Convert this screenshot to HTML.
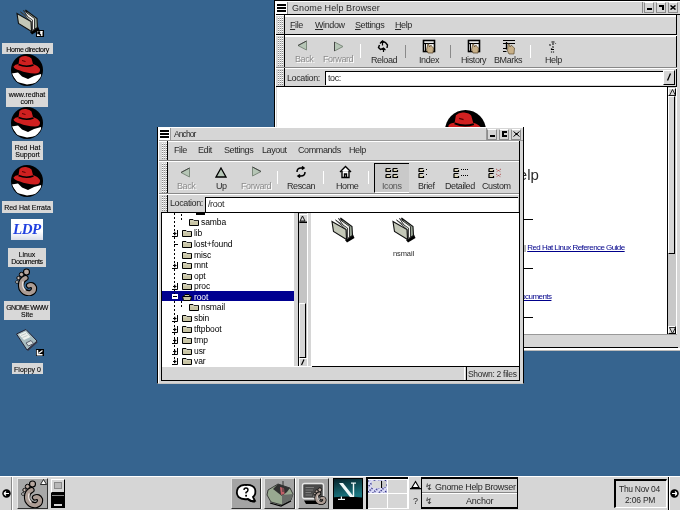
<!DOCTYPE html>
<html><head><meta charset="utf-8">
<style>
*{margin:0;padding:0;box-sizing:border-box}
html,body{width:680px;height:510px;overflow:hidden}
body{position:relative;background:#36648f;font-family:"Liberation Sans",sans-serif;font-size:11px;color:#000}
.a{position:absolute}
.g{background:#d6d6d6}
.w{background:#fff}
.k{background:#000}
.t{position:absolute;white-space:nowrap;line-height:12px;will-change:transform;color:#2a2a2a}
.hd{background:repeating-linear-gradient(90deg,transparent 0 1px,#d6d6d6 1px 2px),repeating-linear-gradient(0deg,#8a8a8a 0 1px,#fff 1px 2px)}
.dis{color:#8c8c8c;text-shadow:1px 1px 0 #fff}
.lbl{position:absolute;background:#d8d8d8;font-size:7px;line-height:7px;text-align:center;white-space:nowrap;padding-top:3px;will-change:transform;-webkit-text-stroke:0.1px #000}
u{text-decoration:underline;text-underline-offset:1px}
</style></head><body>
<!-- ============ DESKTOP ICONS ============ -->
<svg width="0" height="0" style="position:absolute">
<defs>
<symbol id="rh" viewBox="0 0 32 32">
<clipPath id="rhc"><circle cx="16" cy="16" r="15.2"/></clipPath>
<circle cx="16" cy="16" r="16" fill="#000"/>
<g clip-path="url(#rhc)">
<path d="M0.5 19.5L7 18.5L11 22.5L17 25L23 22L30 20L31 24L26 29L16 30.5L6 28Z" fill="#fff"/>
<path d="M2.5 12.5Q4 10 7.5 10L8.5 4Q11 1.5 15 2Q19 2.5 20.5 4.5L22 10Q27 11.5 29 15Q29.5 19.5 24 19.5Q15 19 9 16.5Q3 15 2.5 12.5Z" fill="#d02020"/>
<path d="M7.5 10.5Q15 13.5 22.5 11" fill="none" stroke="#000" stroke-width="1.5"/>
<path d="M11 6.5L14.5 7.5" stroke="#500" stroke-width="1"/>
</g>
</symbol>
<symbol id="fold" viewBox="0 0 27 28">
<path d="M17 24L25 18.5L26.5 22L19 26.5Z" fill="#000"/>
<path d="M12.5 2L24 10.5L24.5 19.5L18.5 23.5L18 13.5Z" fill="#98a494" stroke="#111" stroke-width="1.1"/>
<path d="M10.5 2.5L21.5 10.5L21.5 21L18.5 23.5L18 13.5Z" fill="#f4f4f0" stroke="#222" stroke-width="0.9"/>
<path d="M7.5 4L19.5 12L19.5 22.5L18.5 23.5L18 13.5Z" fill="#dde2da" stroke="#333" stroke-width="0.9"/>
<path d="M4 5.5L18 13.5L18.5 23.5L5.5 15.5Z" fill="#c4c8b8" stroke="#111" stroke-width="1.1"/>
</symbol>
<symbol id="tf" viewBox="0 0 10 8">
<path d="M0.5 1.5H4L5 2.5H9.5V7.5H0.5Z" fill="#c8c4a4" stroke="#000" stroke-width="1"/>
<path d="M1 3H9" stroke="#fff" stroke-width="0.6" opacity="0.6"/>
</symbol>
</defs>
</svg>
<svg class="a" style="left:13px;top:8px" width="27" height="28"><use href="#fold"/></svg>
<svg class="a" style="left:36px;top:30px" width="8" height="7"><rect width="8" height="7" fill="#000"/><rect x="1" y="1" width="5.5" height="5" fill="#fff"/><path d="M2 2.5L5 5.5M2 2H3.5V3.5H2Z" stroke="#000" stroke-width="1.4"/><rect x="5" y="1" width="1.5" height="1.2" fill="#fff"/></svg>
<div class="lbl" style="left:2px;top:43px;width:51px;height:11px" ><span style="letter-spacing:-0.35px">Home directory</span></div>

<svg class="a" style="left:11px;top:54px" width="32" height="32"><use href="#rh"/></svg>
<div class="lbl" style="left:6px;top:88px;width:42px;height:19px">www.redhat<br>com</div>

<svg class="a" style="left:11px;top:107px" width="32" height="32"><use href="#rh"/></svg>
<div class="lbl" style="left:12px;top:141px;width:31px;height:19px">Red Hat<br>Support</div>

<svg class="a" style="left:11px;top:165px" width="32" height="32"><use href="#rh"/></svg>
<div class="lbl" style="left:2px;top:201px;width:51px;height:12px">Red Hat Errata</div>

<div class="a w" style="left:11px;top:219px;width:32px;height:21px;background:linear-gradient(#fff 60%,#d8dce8)"></div>
<div class="t" style="left:13px;top:222px;font-family:'Liberation Serif',serif;font-weight:bold;font-style:italic;font-size:15px;line-height:15px;color:#2040e0;letter-spacing:-0.5px">LDP</div>
<div class="lbl" style="left:8px;top:248px;width:38px;height:19px">Linux<br><span style="letter-spacing:-0.45px">Documents</span></div>

<svg width="0" height="0" style="position:absolute"><defs><symbol id="foot" viewBox="0 0 24 28"><path d="M11.5 10Q5.5 13 7.5 20.5Q10.5 26 16.5 25Q20.5 23.5 20 19.5Q18.5 16 15 17.5" fill="none" stroke="#000" stroke-width="6.2" stroke-linecap="round"/><path d="M11.5 10Q5.5 13 7.5 20.5Q10.5 26 16.5 25Q20.5 23.5 20 19.5Q18.5 16 15 17.5" fill="none" stroke="#ac9c94" stroke-width="4" stroke-linecap="round"/><path d="M9 14Q8 19 11 22" fill="none" stroke="#ece4e0" stroke-width="1.5" stroke-linecap="round"/><circle cx="12.5" cy="4" r="3" fill="#b8a8a0" stroke="#000" stroke-width="1.1"/><circle cx="7.5" cy="6.5" r="2.2" fill="#b8a8a0" stroke="#000" stroke-width="1"/><circle cx="4.5" cy="10" r="1.7" fill="#c8b8b0" stroke="#000" stroke-width="0.9"/><circle cx="3" cy="14" r="1.4" fill="#f0f0f0" stroke="#000" stroke-width="0.8"/></symbol></defs></svg><svg class="a" style="left:14px;top:268px" width="24" height="28"><use href="#foot"/></svg>
<div class="lbl" style="left:4px;top:301px;width:46px;height:19px"><span style="letter-spacing:-0.75px">GNOME WWW</span><br>Site</div>

<svg class="a" style="left:15px;top:328px" width="24" height="24"><path d="M1.5 6L11 1.5L22 13L12 22Z" fill="#a8bcc0" stroke="#223" stroke-width="1"/><path d="M4 6.5L10.5 3.5L15.5 9L9 12Z" fill="#eef2ee"/><path d="M6 7.5L11 5.5M7.5 9.5L12.5 7.5" stroke="#b8c0c0" stroke-width="0.8"/><path d="M11 15L16 12.5L18.5 15.5L13.5 18Z" fill="#d8e0e0" stroke="#445" stroke-width="0.8"/><path d="M12 22L22 13L22.5 14.5L13 23Z" fill="#334"/></svg>
<svg class="a" style="left:36px;top:349px" width="8" height="7"><rect width="8" height="7" fill="#000"/><path d="M1.5 1V5.8H6.5" fill="none" stroke="#fff" stroke-width="1.5"/><path d="M2.5 4.5L6.5 1.5" stroke="#fff" stroke-width="1.3"/></svg>
<div class="lbl" style="left:12px;top:363px;width:31px;height:11px">Floppy 0</div>
<!-- ============ HELP BROWSER WINDOW ============ -->
<div class="a g" style="left:274px;top:0;width:410px;height:351px;border-left:1px solid #000;border-top:1px solid #000;border-bottom:1px solid #bbb"></div>
<div class="a" style="left:275px;top:348px;width:405px;height:2px;background:#fff"></div>
<div class="a" style="left:275px;top:1px;width:405px;height:1px;background:#fff"></div>
<div class="a" style="left:275px;top:1px;width:1px;height:348px;background:#fff"></div>
<!-- title bar -->
<div class="a" style="left:276px;top:2px;width:11px;height:12px;background:#fff"></div>
<div class="a k" style="left:277px;top:4px;width:9px;height:2px"></div>
<div class="a k" style="left:277px;top:7px;width:9px;height:2px"></div>
<div class="a k" style="left:277px;top:10px;width:9px;height:2px"></div>
<div class="a" style="left:287px;top:2px;width:1px;height:12px;background:#888"></div>
<div class="a" style="left:642px;top:2px;width:1px;height:11px;background:#888"></div>
<div class="t" style="left:292px;top:2px;font-size:9px;letter-spacing:0.1px">Gnome Help Browser</div>
<!-- title buttons -->
<div class="a" style="left:644px;top:2px;width:10px;height:11px;border-top:1px solid #fff;border-left:1px solid #8c8c8c;border-right:1px solid #8c8c8c;border-bottom:1px solid #8c8c8c"></div>
<div class="a k" style="left:647px;top:8px;width:5px;height:2px"></div>
<div class="a" style="left:656px;top:2px;width:10px;height:11px;border-top:1px solid #fff;border-left:1px solid #8c8c8c;border-right:1px solid #8c8c8c;border-bottom:1px solid #8c8c8c"></div>
<div class="a k" style="left:659px;top:5px;width:5px;height:2px"></div>
<div class="a k" style="left:662px;top:5px;width:2px;height:5px"></div>
<div class="a" style="left:668px;top:2px;width:10px;height:11px;border-top:1px solid #fff;border-left:1px solid #8c8c8c;border-right:1px solid #8c8c8c;border-bottom:1px solid #8c8c8c"></div>
<svg class="a" style="left:670px;top:5px" width="6" height="5"><path d="M0.5 0.5L5.5 4.5M5.5 0.5L0.5 4.5" stroke="#000" stroke-width="1.5"/></svg>
<div class="a k" style="left:276px;top:14px;width:404px;height:1px"></div>
<!-- menubar -->
<div class="a" style="left:276px;top:15px;width:401px;height:1px;background:#fff"></div>
<div class="a hd" style="left:278px;top:17px;width:5px;height:16px;"></div>
<div class="a k" style="left:284px;top:15px;width:1px;height:19px"></div>
<div class="a" style="left:285px;top:16px;width:391px;height:1px;background:#fff"></div>
<div class="a k" style="left:676px;top:15px;width:1px;height:72px"></div>
<div class="t" style="left:290px;top:19px;font-size:9px;letter-spacing:-0.4px"><u>F</u>ile</div>
<div class="t" style="left:315px;top:19px;font-size:9px;letter-spacing:-0.4px"><u>W</u>indow</div>
<div class="t" style="left:355px;top:19px;font-size:9px;letter-spacing:-0.4px"><u>S</u>ettings</div>
<div class="t" style="left:395px;top:19px;font-size:9px;letter-spacing:-0.4px"><u>H</u>elp</div>
<div class="a k" style="left:276px;top:34px;width:401px;height:1px"></div>
<!-- toolbar -->
<div class="a" style="left:276px;top:35px;width:401px;height:1px;background:#fff"></div>
<div class="a hd" style="left:278px;top:37px;width:5px;height:29px;"></div>
<div class="a k" style="left:284px;top:35px;width:1px;height:32px"></div>
<div class="a" style="left:285px;top:36px;width:391px;height:1px;background:#fff"></div>
<div class="a" style="left:276px;top:67px;width:401px;height:1px;background:#888"></div>
<!-- location bar -->
<div class="a" style="left:276px;top:68px;width:401px;height:1px;background:#fff"></div>
<div class="a hd" style="left:278px;top:70px;width:5px;height:15px;"></div>
<div class="a k" style="left:284px;top:68px;width:1px;height:18px"></div>
<div class="t" style="left:287px;top:72px;font-size:9px;letter-spacing:-0.4px">Location:</div>
<div class="a w" style="left:325px;top:71px;width:338px;height:14px;border-top:1px solid #000;border-left:1px solid #000"></div>
<div class="t" style="left:328px;top:72px;font-size:9px;letter-spacing:-0.4px">toc:</div>
<div class="a g" style="left:663px;top:70px;width:12px;height:15px;border-top:1px solid #fff;border-left:1px solid #fff;border-right:1px solid #000;border-bottom:1px solid #000"></div>
<svg class="a" style="left:666px;top:73px" width="6" height="8"><path d="M4.5 0.5L1.5 7.5" stroke="#000" stroke-width="1.3"/></svg>
<div class="a k" style="left:276px;top:86px;width:401px;height:1px"></div>
<!-- content -->
<div class="a w" style="left:277px;top:87px;width:390px;height:247px"></div>
<div class="a k" style="left:667px;top:87px;width:1px;height:247px"></div>
<div class="a" style="left:668px;top:87px;width:8px;height:247px;background:#c8c8c8"></div>
<div class="a" style="left:676px;top:87px;width:1px;height:248px;background:#fff"></div>
<div class="a" style="left:277px;top:334px;width:400px;height:1px;background:#999"></div>
<!-- status bar -->
<div class="a k" style="left:276px;top:347px;width:402px;height:1px"></div>
<!-- toolbar items -->
<svg class="a" style="left:297px;top:40px" width="11" height="11"><path d="M9.5 1L1 5.5L9.5 10Z" fill="#b6c6b6" stroke="#7c8a7c" stroke-width="1"/><path d="M9.5 1L1 5.5" stroke="#444" stroke-width="1"/></svg>
<div class="t dis" style="left:295px;top:53px;font-size:9px;letter-spacing:-0.4px">Back</div>
<svg class="a" style="left:333px;top:41px" width="11" height="11"><path d="M1.5 1L10 5.5L1.5 10Z" fill="#b6c6b6" stroke="#7c8a7c" stroke-width="1"/><path d="M1.5 1L1.5 10" stroke="#444" stroke-width="1"/></svg>
<div class="t dis" style="left:323px;top:53px;font-size:9px;letter-spacing:-0.4px">Forward</div>
<div class="a" style="left:360px;top:44px;width:1px;height:14px;background:#fff"></div>
<svg class="a" style="left:376px;top:39px" width="14" height="14"><path d="M4 4.5L6.5 2L9.5 3.5L11.5 6L11 9M3.5 6L2.5 8.5L4.5 10.5L7 9.5L9.5 11" fill="none" stroke="#000" stroke-width="1.4"/><path d="M6.5 2V6.5M5 3.5L6.5 2L8 3.5M7.5 9V13M6 10.5L7.5 9L9 10.5" fill="none" stroke="#000" stroke-width="1.2"/></svg>
<div class="t" style="left:371px;top:54px;font-size:9px;letter-spacing:-0.4px">Reload</div>
<div class="a" style="left:405px;top:45px;width:1px;height:13px;background:#8a8a8a"></div>
<svg class="a" style="left:422px;top:39px" width="14" height="15"><rect x="1.5" y="1.5" width="11" height="11" fill="#fff" stroke="#000" stroke-width="1.6"/><path d="M1.5 4.5H12.5" stroke="#000" stroke-width="1.2"/><path d="M3.5 5V12" stroke="#000" stroke-width="1"/><path d="M5.5 6Q6 3.5 7 6L7.5 8L8.5 6.5Q9.5 6 10 7.5L11.5 9L11 14H6L4.5 11Z" fill="#c8b088" stroke="#4a3a20" stroke-width="0.7"/></svg>
<div class="t" style="left:419px;top:54px;font-size:9px;letter-spacing:-0.4px">Index</div>
<div class="a" style="left:450px;top:45px;width:1px;height:13px;background:#8a8a8a"></div>
<svg class="a" style="left:467px;top:39px" width="14" height="15"><rect x="1.5" y="1.5" width="11" height="11" fill="#fff" stroke="#000" stroke-width="1.6"/><path d="M1.5 4.5H12.5" stroke="#000" stroke-width="1.2"/><path d="M3.5 5V12" stroke="#000" stroke-width="1"/><path d="M5.5 6Q6 3.5 7 6L7.5 8L8.5 6.5Q9.5 6 10 7.5L11.5 9L11 14H6L4.5 11Z" fill="#c8b088" stroke="#4a3a20" stroke-width="0.7"/></svg>
<div class="t" style="left:461px;top:54px;font-size:9px;letter-spacing:-0.4px">History</div>
<svg class="a" style="left:502px;top:39px" width="14" height="16"><path d="M1 1.5H13M1 4.5H13M1 9.5H4.5M1 12.5H4.5" stroke="#000" stroke-width="1.2"/><path d="M4.5 3V10.5" stroke="#000" stroke-width="1.3"/><path d="M6 6Q6.5 3.5 7.5 6L8 8L9 6.5Q10 6 10.5 7.5L12.5 9L12 15H7L5.5 12Z" fill="#c8b088" stroke="#4a3a20" stroke-width="0.6"/></svg>
<div class="t" style="left:494px;top:54px;font-size:9px;letter-spacing:-0.4px">BMarks</div>
<div class="a" style="left:530px;top:45px;width:1px;height:13px;background:#fff"></div>
<svg class="a" style="left:548px;top:40px" width="10" height="13"><path d="M3.5 2H6.5M4 4H6M1.5 4.5L2.5 5.5M7.5 3V3.5M4.5 6.5L5.5 7.5M3.5 8.5V9.5H6M3.5 11.5V12.5M5.5 11.5V12.5" stroke="#000" stroke-width="1.2"/></svg>
<div class="t" style="left:545px;top:54px;font-size:9px;letter-spacing:-0.4px">Help</div>
<!-- help content -->
<svg class="a" style="left:445px;top:110px" width="41" height="41"><use href="#rh"/></svg>
<div class="t" style="left:508px;top:165px;font-size:15px;line-height:20px">Help</div>
<div class="a k" style="left:412px;top:219px;width:121px;height:1px"></div>
<div class="t" style="left:524px;top:242px;font-size:8px;letter-spacing:-0.55px">|&nbsp;<span style="color:#00008b;text-decoration:underline">Red Hat Linux Reference Guide</span></div>
<div class="a k" style="left:412px;top:268px;width:121px;height:1px"></div>
<div class="t" style="left:497px;top:291px;font-size:8px;letter-spacing:-0.55px"><span style="color:#00008b;text-decoration:underline">Other Documents</span></div>
<div class="a k" style="left:412px;top:317px;width:121px;height:1px"></div>
<!-- help scrollbar -->
<div class="a" style="left:668px;top:88px;width:8px;height:8px;border-top:1px solid #fff;border-left:1px solid #fff;border-right:1px solid #000;border-bottom:1px solid #000;background:#d6d6d6"></div>
<svg class="a" style="left:669px;top:89px" width="7" height="7"><path d="M3.5 0.5L0.5 6.5H6.5Z" fill="#d6d6d6" stroke="#000" stroke-width="0.8"/></svg>
<div class="a" style="left:668px;top:96px;width:7px;height:158px;border-top:1px solid #fff;border-left:1px solid #fff;border-right:1px solid #000;border-bottom:1px solid #000;background:#d6d6d6"></div>
<div class="a" style="left:668px;top:326px;width:8px;height:8px;border-top:1px solid #fff;border-left:1px solid #fff;border-right:1px solid #000;border-bottom:1px solid #000;background:#d6d6d6"></div>
<svg class="a" style="left:669px;top:327px" width="7" height="7"><path d="M3.5 6.5L0.5 0.5H6.5Z" fill="#d6d6d6" stroke="#000" stroke-width="0.8"/></svg>
<!-- ============ ANCHOR WINDOW ============ -->
<div class="a g" style="left:157px;top:127px;width:367px;height:257px;border-right:1px solid #000;border-bottom:1px solid #c4c4c4;border-left:1px solid #000"></div>
<div class="a" style="left:158px;top:127px;width:365px;height:1px;background:#fff"></div>
<div class="a" style="left:158px;top:128px;width:1px;height:255px;background:#fff"></div>
<!-- title -->
<div class="a" style="left:159px;top:128px;width:11px;height:12px;background:#fff"></div>
<div class="a k" style="left:160px;top:130px;width:9px;height:2px"></div>
<div class="a k" style="left:160px;top:133px;width:9px;height:2px"></div>
<div class="a k" style="left:160px;top:136px;width:9px;height:2px"></div>
<div class="a" style="left:170px;top:128px;width:1px;height:12px;background:#999"></div>
<div class="t" style="left:174px;top:128px;font-size:8.5px;letter-spacing:-0.9px">Anchor</div>
<div class="a" style="left:486px;top:128px;width:1px;height:12px;background:#999"></div>
<div class="a" style="left:487px;top:129px;width:10px;height:11px;border-top:1px solid #fff;border-left:1px solid #8c8c8c;border-right:1px solid #8c8c8c;border-bottom:1px solid #8c8c8c"></div>
<div class="a k" style="left:490px;top:135px;width:5px;height:2px"></div>
<div class="a" style="left:499px;top:129px;width:10px;height:11px;border-top:1px solid #fff;border-left:1px solid #8c8c8c;border-right:1px solid #8c8c8c;border-bottom:1px solid #8c8c8c"></div>
<div class="a" style="left:502px;top:131px;width:5px;height:6px;border:2px solid #000;border-right:none"></div>
<div class="a" style="left:511px;top:129px;width:10px;height:11px;border-top:1px solid #fff;border-left:1px solid #8c8c8c;border-right:1px solid #8c8c8c;border-bottom:1px solid #8c8c8c"></div>
<svg class="a" style="left:513px;top:131px" width="7" height="6"><path d="M0.5 0.5L6.5 5.5M6.5 0.5L0.5 5.5" stroke="#000" stroke-width="1"/><rect x="2.5" y="2" width="2" height="2" fill="#000"/></svg>
<div class="a" style="left:159px;top:140px;width:364px;height:1px;background:#9a9a9a"></div>
<!-- menubar -->
<div class="a" style="left:159px;top:141px;width:360px;height:1px;background:#fff"></div>
<div class="a hd" style="left:162px;top:143px;width:5px;height:16px"></div>
<div class="a k" style="left:167px;top:141px;width:1px;height:72px"></div>
<div class="a k" style="left:519px;top:141px;width:1px;height:72px"></div>
<div class="t" style="left:174px;top:144px;font-size:9px;letter-spacing:-0.4px">File</div>
<div class="t" style="left:198px;top:144px;font-size:9px;letter-spacing:-0.4px">Edit</div>
<div class="t" style="left:224px;top:144px;font-size:9px;letter-spacing:-0.4px">Settings</div>
<div class="t" style="left:262px;top:144px;font-size:9px;letter-spacing:-0.4px">Layout</div>
<div class="t" style="left:298px;top:144px;font-size:9px;letter-spacing:-0.4px">Commands</div>
<div class="t" style="left:349px;top:144px;font-size:9px;letter-spacing:-0.4px">Help</div>
<div class="a" style="left:159px;top:160px;width:360px;height:1px;background:#8a8a8a"></div>
<!-- toolbar -->
<div class="a" style="left:159px;top:161px;width:360px;height:1px;background:#fff"></div>
<div class="a hd" style="left:162px;top:163px;width:5px;height:30px"></div>
<div class="a" style="left:159px;top:193px;width:360px;height:1px;background:#8a8a8a"></div>
<svg class="a" style="left:180px;top:167px" width="11" height="11"><path d="M9.5 1L1 5.5L9.5 10Z" fill="#b6c6b6" stroke="#7c8a7c" stroke-width="1"/><path d="M9.5 1L1 5.5" stroke="#444" stroke-width="1"/></svg>
<div class="t dis" style="left:177px;top:180px;font-size:9px;letter-spacing:-0.4px">Back</div>
<svg class="a" style="left:215px;top:167px" width="12" height="11"><path d="M6 1L11 10H1Z" fill="#b6c6b6" stroke="#000" stroke-width="1.3"/></svg>
<div class="t" style="left:216px;top:180px;font-size:9px;letter-spacing:-0.4px">Up</div>
<svg class="a" style="left:251px;top:166px" width="11" height="11"><path d="M1.5 1L10 5.5L1.5 10Z" fill="#b6c6b6" stroke="#7c8a7c" stroke-width="1"/><path d="M1.5 1L10 5.5" stroke="#444" stroke-width="1"/></svg>
<div class="t dis" style="left:241px;top:180px;font-size:9px;letter-spacing:-0.4px">Forward</div>
<div class="a" style="left:277px;top:171px;width:1px;height:13px;background:#fff"></div>
<svg class="a" style="left:295px;top:166px" width="12" height="12"><path d="M2 6Q2 2 6 2H8M7 0.5L9 2L7 3.5M10 6Q10 10 6 10H4M5 8.5L3 10L5 11.5" fill="none" stroke="#000" stroke-width="1.5"/></svg>
<div class="t" style="left:287px;top:180px;font-size:9px;letter-spacing:-0.4px">Rescan</div>
<div class="a" style="left:323px;top:171px;width:1px;height:13px;background:#fff"></div>
<svg class="a" style="left:339px;top:165px" width="13" height="14"><path d="M1 7L6.5 1.5L12 7M3 6V12.5H10V6M5.5 12.5V9H7.5V12.5" fill="#fff" stroke="#000" stroke-width="1.4"/></svg>
<div class="t" style="left:336px;top:180px;font-size:9px;letter-spacing:-0.4px">Home</div>
<div class="a" style="left:368px;top:171px;width:1px;height:13px;background:#fff"></div>
<div class="a" style="left:374px;top:163px;width:35px;height:30px;background:#c9c9c9;border-top:1px solid #000;border-left:1px solid #000;border-bottom:1px solid #fff"></div>
<svg class="a" style="left:385px;top:167px" width="14" height="12"><g fill="#d8d0b0" stroke="#000" stroke-width="1.2"><path d="M1 1.5H5.5M1 1.5V4.5H5.5V3"/><path d="M8 1.5H12.5M8 1.5V4.5H12.5V3"/><path d="M1 7.5H5.5M1 7.5V10.5H5.5V9"/><path d="M8 7.5H12.5M8 7.5V10.5H12.5V9"/></g></svg>
<div class="t" style="left:382px;top:180px;font-size:9px;letter-spacing:-0.4px;color:#555">Icons</div>
<svg class="a" style="left:418px;top:167px" width="12" height="12"><g fill="#d8d0b0" stroke="#000" stroke-width="1.2"><path d="M1 1.5H5.5M1 1.5V4.5H5.5V3"/><path d="M1 6.5H5.5M1 6.5V10.5H5.5V9"/></g><path d="M8 2.5H10M8 7.5H10" stroke="#000" stroke-dasharray="1 1"/></svg>
<div class="t" style="left:418px;top:180px;font-size:9px;letter-spacing:-0.4px">Brief</div>
<svg class="a" style="left:453px;top:167px" width="16" height="12"><g fill="#d8d0b0" stroke="#000" stroke-width="1.2"><path d="M1 1.5H5.5M1 1.5V4.5H5.5V3"/><path d="M1 6.5H5.5M1 6.5V10.5H5.5V9"/></g><path d="M8 2.5H15M8 8.5H15" stroke="#000" stroke-dasharray="1 1"/></svg>
<div class="t" style="left:445px;top:180px;font-size:9px;letter-spacing:-0.4px">Detailed</div>
<svg class="a" style="left:488px;top:167px" width="14" height="12"><g fill="#d8d0b0" stroke="#000" stroke-width="1.2"><path d="M1 1.5H5.5M1 1.5V4.5H5.5V3"/><path d="M1 6.5H5.5M1 6.5V10.5H5.5V9"/></g><path d="M8 2L13 5M13 2L8 5M8 7L13 10M13 7L8 10" stroke="#a44" stroke-width="1" stroke-dasharray="1 1"/></svg>
<div class="t" style="left:482px;top:180px;font-size:9px;letter-spacing:-0.4px">Custom</div>
<!-- location -->
<div class="a" style="left:159px;top:194px;width:360px;height:1px;background:#fff"></div>
<div class="a hd" style="left:162px;top:196px;width:5px;height:15px"></div>
<div class="t" style="left:170px;top:197px;font-size:9px;letter-spacing:-0.4px">Location:</div>
<div class="a w" style="left:205px;top:197px;width:313px;height:15px;border-top:1px solid #000;border-left:1px solid #000"></div>
<div class="t" style="left:208px;top:198px;font-size:9px;letter-spacing:-0.4px">/root</div>
<!-- content box -->
<div class="a k" style="left:161px;top:212px;width:359px;height:1px"></div>
<div class="a k" style="left:161px;top:212px;width:1px;height:169px"></div>
<div class="a k" style="left:519px;top:212px;width:1px;height:169px"></div>
<div class="a k" style="left:161px;top:380px;width:359px;height:1px"></div>
<!-- tree pane -->
<div class="a w" style="left:162px;top:213px;width:132px;height:153px"></div>
<div class="a" style="left:294px;top:213px;width:4px;height:153px;background:#d6d6d6"></div>
<div class="a k" style="left:298px;top:213px;width:1px;height:153px"></div>
<div class="a" style="left:299px;top:213px;width:8px;height:153px;background:#c4c4c4"></div>
<div class="a" style="left:307px;top:213px;width:1px;height:153px;background:#fff"></div>
<div class="a" style="left:308px;top:213px;width:3px;height:153px;background:#d6d6d6"></div>
<div class="a" style="left:311px;top:213px;width:1px;height:153px;background:#fff"></div>
<div class="a" style="left:299px;top:214px;width:8px;height:9px;background:#d6d6d6;border-top:1px solid #fff;border-left:1px solid #fff;border-bottom:1px solid #000"></div>
<svg class="a" style="left:299px;top:215px" width="8" height="8"><path d="M3.5 1L1 6H6Z" fill="#d6d6d6" stroke="#000" stroke-width="0.9"/><path d="M0 7H8" stroke="#000"/></svg>
<div class="a" style="left:299px;top:303px;width:7px;height:55px;background:#d6d6d6;border-top:1px solid #fff;border-left:1px solid #fff;border-right:1px solid #000;border-bottom:1px solid #000"></div>
<div class="a" style="left:299px;top:358px;width:8px;height:8px;background:#d6d6d6;border-top:1px solid #fff;border-left:1px solid #fff"></div>
<svg class="a" style="left:299px;top:358px" width="8" height="8"><path d="M5 1.5L2.5 7" stroke="#000" stroke-width="1.2"/></svg>
<!-- icon pane -->
<div class="a w" style="left:312px;top:213px;width:207px;height:153px"></div>
<div class="a k" style="left:311px;top:366px;width:208px;height:1px"></div>
<!-- status bar -->
<div class="a" style="left:162px;top:366px;width:150px;height:1px;background:#fff"></div>
<div class="a" style="left:464px;top:367px;width:1px;height:13px;background:#fff"></div>
<div class="a k" style="left:466px;top:367px;width:1px;height:13px"></div>
<div class="a" style="left:467px;top:367px;width:52px;height:13px;overflow:hidden"><div class="t" style="left:1px;top:1px;font-size:8.5px;letter-spacing:-0.3px">Shown: 2 files</div></div>
<!-- tree rows -->
<div class="a k" style="left:196px;top:213px;width:9px;height:2px"></div>
<div class="a" style="left:162px;top:291px;width:132px;height:10px;background:#000090"></div>
<div class="a" style="left:174px;top:213px;width:1px;height:152px;background:repeating-linear-gradient(#000 0 2px,transparent 2px 4px)"></div>
<div class="a" style="left:181px;top:214px;width:1px;height:8px;background:repeating-linear-gradient(#000 0 2px,transparent 2px 4px)"></div>
<div class="a" style="left:181px;top:301px;width:1px;height:6px;background:repeating-linear-gradient(#fff 0 0,transparent 0 0),repeating-linear-gradient(#000 0 2px,transparent 2px 4px)"></div>
<svg class="a" style="left:189px;top:218px" width="10" height="8"><use href="#tf"/></svg>
<div class="t" style="left:201px;top:216px;font-size:8.5px;letter-spacing:-0.1px;color:#000">samba</div>
<svg class="a" style="left:171px;top:229px" width="9" height="9"><path d="M6.5 1V7.5H1" fill="none" stroke="#000" stroke-width="1"/><path d="M2 4.5H5.5M3.75 2.75V6.25" stroke="#000" stroke-width="1.2"/></svg>
<svg class="a" style="left:182px;top:229px" width="10" height="8"><use href="#tf"/></svg>
<div class="t" style="left:194px;top:227px;font-size:8.5px;letter-spacing:-0.1px;color:#000">lib</div>
<div class="a k" style="left:174px;top:244px;width:4px;height:1px"></div>
<svg class="a" style="left:182px;top:240px" width="10" height="8"><use href="#tf"/></svg>
<div class="t" style="left:194px;top:238px;font-size:8.5px;letter-spacing:-0.1px;color:#000">lost+found</div>
<svg class="a" style="left:182px;top:251px" width="10" height="8"><use href="#tf"/></svg>
<div class="t" style="left:194px;top:249px;font-size:8.5px;letter-spacing:-0.1px;color:#000">misc</div>
<svg class="a" style="left:171px;top:261px" width="9" height="9"><path d="M6.5 1V7.5H1" fill="none" stroke="#000" stroke-width="1"/><path d="M2 4.5H5.5M3.75 2.75V6.25" stroke="#000" stroke-width="1.2"/></svg>
<svg class="a" style="left:182px;top:261px" width="10" height="8"><use href="#tf"/></svg>
<div class="t" style="left:194px;top:259px;font-size:8.5px;letter-spacing:-0.1px;color:#000">mnt</div>
<svg class="a" style="left:182px;top:272px" width="10" height="8"><use href="#tf"/></svg>
<div class="t" style="left:194px;top:270px;font-size:8.5px;letter-spacing:-0.1px;color:#000">opt</div>
<svg class="a" style="left:171px;top:282px" width="9" height="9"><path d="M6.5 1V7.5H1" fill="none" stroke="#000" stroke-width="1"/><path d="M2 4.5H5.5M3.75 2.75V6.25" stroke="#000" stroke-width="1.2"/></svg>
<svg class="a" style="left:182px;top:282px" width="10" height="8"><use href="#tf"/></svg>
<div class="t" style="left:194px;top:280px;font-size:8.5px;letter-spacing:-0.1px;color:#000">proc</div>
<div class="a" style="left:172px;top:294px;width:6px;height:5px;background:#fff"></div><div class="a k" style="left:173px;top:296px;width:4px;height:1px"></div>
<svg class="a" style="left:182px;top:293px" width="10" height="8"><path d="M1.5 3.5L3 1.5H7L8.5 3.5" fill="#c8c4a4" stroke="#000" stroke-width="1"/><path d="M0.5 3.5H9.5L8.5 7.5H1.5Z" fill="#c8c4a4" stroke="#000" stroke-width="1"/></svg>
<div class="t" style="left:194px;top:291px;font-size:8.5px;letter-spacing:-0.1px;color:#fff">root</div>
<svg class="a" style="left:189px;top:303px" width="10" height="8"><use href="#tf"/></svg>
<div class="t" style="left:201px;top:301px;font-size:8.5px;letter-spacing:-0.1px;color:#000">nsmail</div>
<svg class="a" style="left:171px;top:314px" width="9" height="9"><path d="M6.5 1V7.5H1" fill="none" stroke="#000" stroke-width="1"/><path d="M2 4.5H5.5M3.75 2.75V6.25" stroke="#000" stroke-width="1.2"/></svg>
<svg class="a" style="left:182px;top:314px" width="10" height="8"><use href="#tf"/></svg>
<div class="t" style="left:194px;top:312px;font-size:8.5px;letter-spacing:-0.1px;color:#000">sbin</div>
<svg class="a" style="left:171px;top:325px" width="9" height="9"><path d="M6.5 1V7.5H1" fill="none" stroke="#000" stroke-width="1"/><path d="M2 4.5H5.5M3.75 2.75V6.25" stroke="#000" stroke-width="1.2"/></svg>
<svg class="a" style="left:182px;top:325px" width="10" height="8"><use href="#tf"/></svg>
<div class="t" style="left:194px;top:323px;font-size:8.5px;letter-spacing:-0.1px;color:#000">tftpboot</div>
<svg class="a" style="left:171px;top:336px" width="9" height="9"><path d="M6.5 1V7.5H1" fill="none" stroke="#000" stroke-width="1"/><path d="M2 4.5H5.5M3.75 2.75V6.25" stroke="#000" stroke-width="1.2"/></svg>
<svg class="a" style="left:182px;top:336px" width="10" height="8"><use href="#tf"/></svg>
<div class="t" style="left:194px;top:334px;font-size:8.5px;letter-spacing:-0.1px;color:#000">tmp</div>
<svg class="a" style="left:171px;top:347px" width="9" height="9"><path d="M6.5 1V7.5H1" fill="none" stroke="#000" stroke-width="1"/><path d="M2 4.5H5.5M3.75 2.75V6.25" stroke="#000" stroke-width="1.2"/></svg>
<svg class="a" style="left:182px;top:347px" width="10" height="8"><use href="#tf"/></svg>
<div class="t" style="left:194px;top:345px;font-size:8.5px;letter-spacing:-0.1px;color:#000">usr</div>
<svg class="a" style="left:171px;top:357px" width="9" height="9"><path d="M6.5 1V7.5H1" fill="none" stroke="#000" stroke-width="1"/><path d="M2 4.5H5.5M3.75 2.75V6.25" stroke="#000" stroke-width="1.2"/></svg>
<svg class="a" style="left:182px;top:357px" width="10" height="8"><use href="#tf"/></svg>
<div class="t" style="left:194px;top:355px;font-size:8.5px;letter-spacing:-0.1px;color:#000">var</div>
<svg class="a" style="left:328px;top:216px" width="27" height="28"><use href="#fold"/></svg>
<svg class="a" style="left:389px;top:216px" width="27" height="28"><use href="#fold"/></svg>
<div class="t" style="left:393px;top:248px;font-size:7.5px;letter-spacing:-0.1px">nsmail</div>
<!-- ============ PANEL ============ -->
<div class="a g" style="left:0;top:476px;width:680px;height:34px;border-top:1px solid #fff"></div>
<!-- left hide button -->
<div class="a" style="left:0;top:477px;width:12px;height:33px;background:#d6d6d6;border-right:1px solid #888"></div>
<div class="a" style="left:12px;top:477px;width:1px;height:33px;background:#fff"></div>
<svg class="a" style="left:2px;top:489px" width="9" height="9"><circle cx="4.5" cy="4.5" r="4.2" fill="#000"/><path d="M2 4.5H7M2 4.5L4 2.5M2 4.5L4 6.5" stroke="#fff" stroke-width="1.2"/></svg>
<!-- gnome foot button -->
<div class="a" style="left:17px;top:478px;width:31px;height:31px;background:#a8a8a8;border-top:1px solid #e8e8e8;border-left:1px solid #e8e8e8;border-right:1px solid #303030;border-bottom:1px solid #303030"></div>
<svg class="a" style="left:20px;top:480px" width="24" height="28"><use href="#foot"/></svg>
<svg class="a" style="left:40px;top:479px" width="7" height="6"><path d="M3.5 0.5L6.5 5.5H0.5Z" fill="#fff" stroke="#000" stroke-width="0.8"/></svg>
<!-- small applet -->
<div class="a" style="left:51px;top:479px;width:14px;height:14px;background:#d6d6d6;border-top:1px solid #fff;border-left:1px solid #fff;border-right:1px solid #000;border-bottom:1px solid #000"></div>
<div class="a" style="left:54px;top:482px;width:8px;height:7px;background:#b8b8b8;border:1px solid #888"></div>
<div class="a k" style="left:51px;top:493px;width:14px;height:15px"></div>
<div class="a" style="left:52px;top:495px;width:12px;height:1px;background:#888"></div>
<div class="a" style="left:54px;top:504px;width:8px;height:2px;background:#d6d6d6"></div>
<!-- launcher: help -->
<div class="a" style="left:231px;top:478px;width:30px;height:31px;background:#a4a4a4;border-top:1px solid #e0e0e0;border-left:1px solid #e0e0e0;border-right:1px solid #303030;border-bottom:1px solid #303030"></div>
<svg class="a" style="left:234px;top:483px" width="24" height="22"><path d="M4 5Q7 1.5 12 2Q19 1.5 21 6Q22.5 11 19 14L21 18Q17 19 14 16Q8 17 4.5 14Q1.5 10 4 5Z" fill="#fff" stroke="#000" stroke-width="1.8"/><path d="M14.5 16.5Q18 19 21 18.5" stroke="#000" stroke-width="2" fill="none"/><path d="M10 7Q10 5 12 5Q14 5 14 7Q14 8.5 12 9.5V10.5" fill="none" stroke="#000" stroke-width="1.4"/><rect x="11.2" y="11.8" width="1.8" height="1.8" fill="#000"/></svg>
<div class="a" style="left:261px;top:478px;width:1px;height:31px;background:#fff"></div>
<!-- launcher: toolbox -->
<div class="a" style="left:264px;top:478px;width:31px;height:31px;background:#a4a4a4;border-top:1px solid #e0e0e0;border-left:1px solid #e0e0e0;border-right:1px solid #303030;border-bottom:1px solid #303030"></div>
<svg class="a" style="left:265px;top:480px" width="29" height="27"><path d="M3 10L13 4L25 8L28 14L26 20L17 25L6 22L2 15Z" fill="#98a890" stroke="#222" stroke-width="0.8"/><path d="M13 4L25 8L22 12L17 16L8 9Z" fill="#303030"/><path d="M15 7L19 8L19.5 14L16 15Z" fill="#c06068"/><path d="M17 15L28 14L26 20L17 25Z" fill="#686c68"/><path d="M18 1V12" stroke="#333" stroke-width="1"/><path d="M5 23L16 26L26 21" stroke="#000" stroke-width="1.2" fill="none"/></svg>
<div class="a" style="left:295px;top:478px;width:1px;height:31px;background:#fff"></div>
<!-- launcher: terminal/config -->
<div class="a" style="left:298px;top:478px;width:31px;height:31px;background:#a4a4a4;border-top:1px solid #e0e0e0;border-left:1px solid #e0e0e0;border-right:1px solid #303030;border-bottom:1px solid #303030"></div>
<svg class="a" style="left:301px;top:482px" width="26" height="24"><rect x="1.5" y="1.5" width="21" height="15" rx="2" fill="#555" stroke="#e8e8e8" stroke-width="1.4"/><rect x="3" y="3" width="18" height="12" fill="#4a4a4a"/><path d="M4.5 5.5H13M4.5 8H12M4.5 10.5H10M4.5 13H11" stroke="#8a8a8a" stroke-width="0.8"/><path d="M3 18.5H22L24 22H5Z" fill="#000"/></svg><svg class="a" style="left:312px;top:486px" width="15" height="20"><use href="#foot"/></svg>
<!-- launcher: netscape -->
<svg class="a" style="left:333px;top:478px" width="30" height="31"><defs><linearGradient id="nsg" x1="0" y1="0" x2="0.3" y2="1"><stop offset="0" stop-color="#06222a"/><stop offset="1" stop-color="#1a7680"/></linearGradient></defs><rect width="30" height="31" fill="#000"/><rect x="1" y="1" width="28" height="18.5" fill="url(#nsg)"/><path d="M1 19.5Q15 17.5 29 20V31H1Z" fill="#000"/><path d="M6 5L10 5L21 19L17 19Z" fill="#f0f8f8"/><rect x="19.8" y="5" width="1.4" height="14" fill="#f0f8f8"/><rect x="18" y="4.5" width="5" height="1.2" fill="#f0f8f8"/><rect x="5" y="20.8" width="7" height="1.2" fill="#f0f8f8"/><rect x="7.8" y="18.5" width="1.2" height="2.5" fill="#f0f8f8"/></svg>
<!-- pager -->
<div class="a" style="left:366px;top:477px;width:43px;height:32px;background:#fff"></div>
<div class="a k" style="left:366px;top:477px;width:42px;height:2px"></div>
<div class="a k" style="left:366px;top:477px;width:2px;height:32px"></div>
<svg class="a" style="left:368px;top:480px" width="19" height="13"><defs><pattern id="pdot" width="4" height="2.5" patternUnits="userSpaceOnUse" patternTransform="rotate(45)"><rect width="4" height="2.5" fill="#dcdcf8"/><rect x="0" y="0" width="1.5" height="1.2" fill="#10106a"/></pattern></defs><rect width="19" height="13" fill="url(#pdot)"/><rect x="4" y="1" width="10" height="7" fill="#dadada"/><rect x="13" y="1" width="1.2" height="7" fill="#000"/><rect x="14.2" y="1" width="4" height="6" fill="#c8c8c8"/></svg>
<div class="a g" style="left:388px;top:480px;width:19px;height:13px"></div>
<div class="a g" style="left:368px;top:494px;width:19px;height:14px"></div>
<div class="a g" style="left:388px;top:494px;width:19px;height:14px"></div>
<!-- tasklist buttons -->
<div class="a" style="left:410px;top:478px;width:10px;height:31px;background:#d6d6d6"></div>
<svg class="a" style="left:410px;top:480px" width="11" height="10"><path d="M5.5 1.5L9 7.5H2Z" fill="#fff" stroke="#000" stroke-width="1.1"/><rect x="0" y="8" width="11" height="1.3" fill="#000"/></svg>
<div class="t" style="left:413px;top:495px;font-size:9px">?</div>
<div class="a" style="left:421px;top:477px;width:97px;height:32px;background:#000"></div>
<div class="a g" style="left:422px;top:479px;width:95px;height:14px;border-bottom:1px solid #888"></div>
<div class="a" style="left:422px;top:493px;width:95px;height:1px;background:#fff"></div>
<div class="a g" style="left:422px;top:494px;width:95px;height:13px"></div>
<div class="t" style="left:425px;top:481px;font-size:9px">&#x21AF;</div>
<div class="t" style="left:435px;top:481px;font-size:9px;letter-spacing:-0.3px">Gnome Help Browser</div>
<div class="t" style="left:425px;top:495px;font-size:9px">&#x21AF;</div>
<div class="t" style="left:466px;top:495px;font-size:9px;letter-spacing:-0.2px">Anchor</div>
<!-- clock -->
<div class="a" style="left:614px;top:479px;width:53px;height:29px;border-top:2px solid #000;border-left:2px solid #000;border-right:1px solid #fff;border-bottom:1px solid #fff"></div>
<div class="t" style="left:619px;top:483px;font-size:8.5px;letter-spacing:-0.3px">Thu Nov 04</div>
<div class="t" style="left:625px;top:494px;font-size:8.5px;letter-spacing:-0.2px">2:06 PM</div>
<div class="a k" style="left:668px;top:477px;width:1px;height:33px"></div>
<div class="a" style="left:669px;top:477px;width:11px;height:33px;background:#d6d6d6;border-left:1px solid #fff"></div>
<svg class="a" style="left:670px;top:489px" width="9" height="9"><circle cx="4.5" cy="4.5" r="4.2" fill="#000"/><path d="M2 4.5H7M7 4.5L5 2.5M7 4.5L5 6.5" stroke="#fff" stroke-width="1.2"/></svg>
</body></html>
